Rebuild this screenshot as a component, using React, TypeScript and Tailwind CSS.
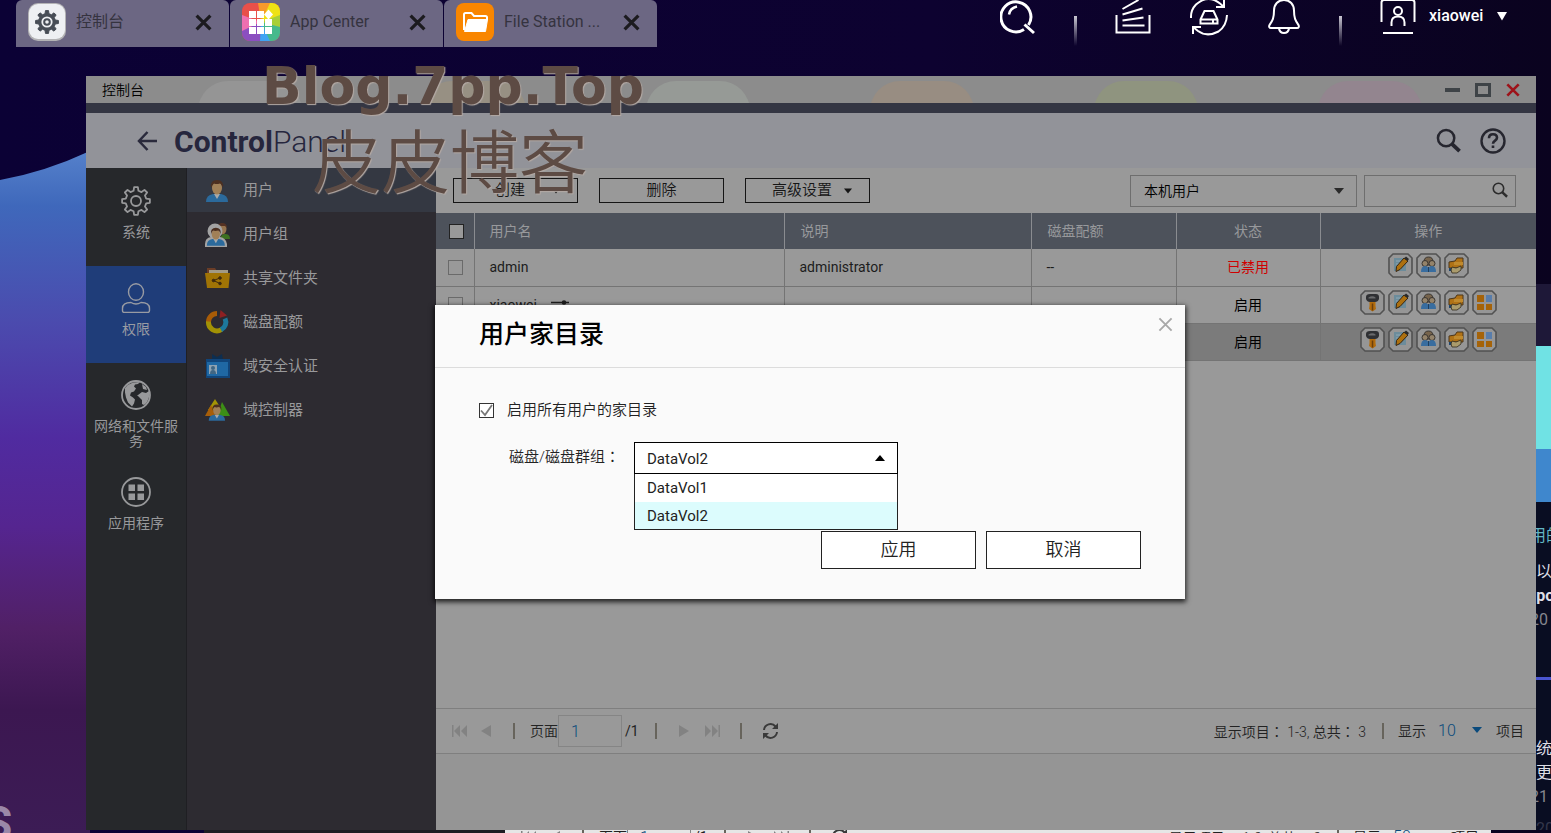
import React, { useState } from 'react';

const FONT = "font-[Roboto,'Noto_Sans_CJK_SC',sans-serif]";

// outline of a cog wheel around (cx, cy)
const cogPath = (cx: number, cy: number, outer: number, inner: number, teeth = 8) => {
  const step = (Math.PI * 2) / teeth;
  const points: string[] = [];
  for (let i = 0; i < teeth; i++) {
    const a = i * step - Math.PI / 2;
    [
      [inner, -0.3],
      [outer, -0.17],
      [outer, 0.17],
      [inner, 0.3],
    ].forEach(([r, k]) => {
      points.push(`${(cx + r * Math.cos(a + k * step)).toFixed(2)} ${(cy + r * Math.sin(a + k * step)).toFixed(2)}`);
    });
  }
  return `M${points.join('L')}Z`;
};

/* ---------- top bar ---------- */

const ControlPanelAppIcon = () => (
  <svg width="38" height="38" viewBox="0 0 38 38">
    <rect width="38" height="38" rx="10" fill="#b3b3b5" />
    <rect x="1" y="1" width="36" height="35" rx="9" fill="#eef0f3" />
    <path d={cogPath(19, 19, 11.5, 8.5)} fill="#474d56" stroke="#474d56" strokeLinejoin="round" />
    <circle cx="19" cy="19" r="5.6" fill="#eef0f3" />
    <circle cx="19" cy="19" r="2.8" fill="none" stroke="#474d56" strokeWidth="2" />
  </svg>
);

const AppCenterIcon = () => (
  <svg width="38" height="38" viewBox="0 0 38 38">
    <defs>
      <clipPath id="app-center-clip">
        <rect width="38" height="38" rx="8" />
      </clipPath>
    </defs>
    <g clipPath="url(#app-center-clip)">
      <rect width="38" height="38" fill="#e8504a" />
      <path d="M16 0h14L19 19z" fill="#f79a2c" />
      <path d="M28 0h10v22L19 19z" fill="#efe215" />
      <path d="M38 12v14L19 19z" fill="#a8cf38" />
      <path d="M38 24v14H26l-7-19z" fill="#46b98c" />
      <path d="M28 38H14l5-19z" fill="#3fa4f3" />
      <path d="M18 38H0V26l19-7z" fill="#8b4fc0" />
      <path d="M0 28V12l19 7z" fill="#ee6fb0" />
    </g>
    <g fill="#fff">
      <path d="M7 8h7v7H7zM15 8h7v7h-7zM7 16h7v7H7zM15 16h7v7h-7zM23 16h7v7h-7zM7 24h7v7H7zM15 24h7v7h-7zM23 24h7v7h-7z" />
      <path d="M26.500 6.500 31 11.500 26.500 16.500 22 11.500z" />
    </g>
  </svg>
);

const FileStationIcon = () => (
  <svg width="38" height="38" viewBox="0 0 38 38">
    <rect width="38" height="38" rx="8" fill="#f98600" />
    <path d="M8 27V11.500q0-1.500 1.500-1.500h6l2.500 3h11.500q1.500 0 1.500 1.500V17" fill="none" stroke="#fff" strokeWidth="2" />
    <path d="M12 16.500h19.500L29.500 28.500H8.500z" fill="#fff" stroke="#fff" strokeLinejoin="round" />
  </svg>
);

const Cross = ({ size, width, className }: { size: number; width: number; className: string }) => (
  <svg width={size} height={size} viewBox="0 0 16 16" className={className}>
    <path d="M1.500 1.500l13 13M14.500 1.500l-13 13" stroke="currentColor" strokeWidth={width} fill="none" />
  </svg>
);

const tabs = [
  { label: '控制台', icon: <ControlPanelAppIcon /> },
  { label: 'App Center', icon: <AppCenterIcon /> },
  { label: 'File Station ...', icon: <FileStationIcon /> },
];

const Divider = () => <span className="h-[30px] w-[3px] mt-4 bg-gradient-to-b from-[#c9c7d2] to-transparent" />;

const TopBar = () => (
  <header className="relative flex justify-between h-[76px] pl-4 pr-11">
    <nav className="flex gap-px h-[47px]">
      {tabs.map((tab) => (
        <div key={tab.label} className="flex items-center w-[213px] pb-[3px] pl-3 pr-[17px] rounded-t-md bg-[#6c6783]">
          {tab.icon}
          <a href="#" className="flex-1 ml-2.5 text-base text-[#35333f]">
            {tab.label}
          </a>
          <button aria-label={`关闭 ${tab.label}`}>
            <Cross size={17} width={3} className="text-[#1c1b1f]" />
          </button>
        </div>
      ))}
    </nav>
    <div className="flex items-start gap-[38px] text-white">
      <button aria-label="搜索">
        <svg width="36" height="36" viewBox="0 0 36 36" fill="none" stroke="currentColor" strokeWidth="3">
          <path d="M24 29.500A15 15 0 1 1 28.500 25M24.500 24.500l9.500 8.500" />
          <path d="M9 14.500q1-6.500 8-8" strokeWidth="2.500" />
        </svg>
      </button>
      <Divider />
      <button aria-label="后台任务">
        <svg width="36" height="36" viewBox="0 0 36 36" fill="none" stroke="currentColor" strokeWidth="2">
          <path d="M1.500 15v17.500h33V15M7.500 25.500h22M7.500 20.500l21-3M7.500 14.500l20-6M7.500 9l16-9" />
        </svg>
      </button>
      <button aria-label="外部设备">
        <svg width="40" height="36" viewBox="0 0 40 36" fill="none" stroke="currentColor" strokeWidth="2">
          <path d="M2 18A18 18 0 0 1 7 4.500Q19-6 31 3.500L35 7M38 15Q37.500 26 29.500 31.500 18 37.500 9 31L4 27" />
          <path d="M35 -1v8h-8M4 34v-7h8" />
          <path d="M15.500 11h9l4 8.500v4h-17v-4zM11.500 19.500h17M24 19.500v4" />
        </svg>
      </button>
      <button aria-label="通知">
        <svg width="34" height="36" viewBox="0 0 34 36" fill="none" stroke="currentColor" strokeWidth="2">
          <path d="M17 0c-6 0-10 4.500-10 10.500 0 8-1.500 10-4.500 14.500-.8 1.500-.3 3 1.500 3h26c1.800 0 2.300-1.500 1.500-3-3-4.500-4.500-6.500-4.500-14.500C27 4.500 23 0 17 0z" />
          <path d="M12 28.500c.5 3 2.500 4.500 5 4.500s4.500-1.500 5-4.500" />
        </svg>
      </button>
      <Divider />
      <button className="flex items-start">
        <svg width="36" height="36" viewBox="0 0 36 36" fill="none" stroke="currentColor" strokeWidth="2">
          <path d="M1.500 22V2.500Q1.500 0 4 0h28q2.500 0 2.500 2.500V22" />
          <circle cx="18" cy="11" r="4" />
          <path d="M11.500 26v-3.500q0-6 6.500-6t6.500 6V26M3 33h30" />
        </svg>
        <span className="w-16 ml-[13px] mt-1 text-base text-left font-medium">xiaowei</span>
        <svg width="10" height="9" viewBox="0 0 10 9" className="ml-1 mt-3">
          <path d="M0 0h10L5 8.500z" fill="currentColor" />
        </svg>
      </button>
    </div>
  </header>
);

/* ---------- left category bar ---------- */

const categories = [
  {
    label: '系统',
    icon: (
      <>
        <path d={cogPath(15, 15, 14, 10.5)} fill="none" stroke="currentColor" strokeWidth="1.800" strokeLinejoin="round" />
        <circle cx="15" cy="15" r="5" fill="none" stroke="currentColor" strokeWidth="1.800" />
      </>
    ),
  },
  {
    label: '权限',
    active: true,
    icon: (
      <g fill="none" stroke="currentColor" strokeWidth="1.400">
        <ellipse cx="15" cy="9" rx="7.500" ry="8.300" />
        <path d="M10 19.500q5 3 10 0c5 0 8.500 1.500 8.500 6v2q0 2-2 2h-23q-2 0-2-2v-2c0-4.500 3.500-6 8.500-6z" />
      </g>
    ),
  },
  {
    label: '网络和文件服务',
    icon: (
      <>
        <circle cx="15" cy="15" r="14" fill="none" stroke="currentColor" strokeWidth="1.800" />
        <path
          d="M4 8q3-4 8-5.500l7-.5-2 2-3 .5-1 2 2 2-2 3-3 1-1 3 3 2 2 2-1 4-2 3-4-4-2-5-1-5zM17 15l4-3 4 1 3-2v6q-1 5-5 8l-2-1 0-4-3-3-2-2zM21 4l4 3 1 3-4-1z"
          fill="currentColor"
        />
      </>
    ),
  },
  {
    label: '应用程序',
    icon: (
      <>
        <circle cx="15" cy="15" r="14" fill="none" stroke="currentColor" strokeWidth="1.800" />
        <path d="M7.500 7.500H14V14H7.500zM16.500 7.500H23V14h-6.500zM7.500 16.500H14V23H7.500zM16.500 16.500H23V23h-6.500z" fill="currentColor" />
      </>
    ),
  },
];

const CategoryBar = () => (
  <nav className="w-[101px] shrink-0 pt-px border-r border-[#1f1f23] bg-[#26282b]">
    {categories.map((item) => (
      <a
        key={item.label}
        href="#"
        className={`flex flex-col items-center h-[97px] pt-[17px] px-2 text-sm leading-[15px] text-center ${
          item.active ? 'bg-[#1f3d79] text-[#989ba3]' : 'text-[#98999b]'
        }`}
      >
        <svg width="30" height="30" viewBox="0 0 30 30">
          {item.icon}
        </svg>
        <span className="mt-[9px]">{item.label}</span>
      </a>
    ))}
  </nav>
);

/* ---------- sub menu ---------- */

const Person = () => (
  <>
    <path d="M1 24q0-7 7-8h8q7 1 7 8z" fill="#2b6a9c" />
    <path d="M9 16l3 5 3-5z" fill="#a9a9a9" />
    <ellipse cx="12" cy="10" rx="5" ry="6.500" fill="#a18057" />
    <path d="M6 10q-1-8 6-8t6 8q-1-4-3-4.500-4 1-6 0-2 1-3 4.500z" fill="#4c2f20" />
  </>
);

const menu = [
  { label: '用户', active: true, icon: <Person /> },
  {
    label: '用户组',
    icon: (
      <>
        <ellipse cx="17" cy="7" rx="4.500" ry="5.500" fill="#96744e" />
        <path d="M12 7q0-6 5-6t5 5l-2-2h-5z" fill="#553223" />
        <path d="M15 17q1-5 5-5 5 0 5 5z" fill="#3d7021" />
        <circle cx="10" cy="9" r="7.500" fill="#a3a3a3" />
        <path d="M0 25v-3q0-6 6-7h9q6 1 7 7v3z" fill="#a3a3a3" />
        <g transform="translate(1 4) scale(.82)">
          <Person />
        </g>
      </>
    ),
  },
  {
    label: '共享文件夹',
    icon: (
      <>
        <path d="M2 2h8l2 3h11v8H2z" fill="#6a3d27" />
        <path d="M4 4h19v8H4z" fill="#a19a85" />
        <path d="M0 7h25l-1.500 15H2z" fill="#a07405" />
        <g fill="#3f2b0d" stroke="#3f2b0d" strokeWidth="1">
          <circle cx="8.500" cy="14.500" r="1.300" />
          <circle cx="15" cy="12" r="1.300" />
          <circle cx="15" cy="17.500" r="1.300" />
          <path d="M15 12l-6.500 2.500 6.500 3" fill="none" />
        </g>
      </>
    ),
  },
  {
    label: '磁盘配额',
    icon: (
      <g fill="none" strokeWidth="5">
        <path d="M12 3.500A8.500 8.500 0 0 0 3.500 12" stroke="#a85c07" />
        <path d="M3.500 11.500A8.500 8.500 0 0 0 16.500 19.500" stroke="#a29205" />
        <path d="M16 19.800A8.500 8.500 0 0 0 20 8.500" stroke="#1d789b" />
        <path d="M14.500 8 15.500 0l6.500 5.500z" fill="#8d2022" stroke="none" />
      </g>
    ),
  },
  {
    label: '域安全认证',
    icon: (
      <>
        <path d="M7 0l5 3 5-3 1 6H7z" fill="#0d2e50" />
        <path d="M1 5h24v19H1z" fill="#11457a" />
        <path d="M2 8h21v14H2z" fill="#1f68a4" />
        <path d="M4 11h8v9H4z" fill="#8fa3b3" />
        <circle cx="8" cy="14" r="2" fill="#3f6684" />
        <path d="M5 20q0-4 3-4t3 4z" fill="#3f6684" />
      </>
    ),
  },
  {
    label: '域控制器',
    icon: (
      <>
        <path d="M10 1l7 11H3z" fill="#a39404" />
        <path d="M6 7l5 11H0z" fill="#a75e09" />
        <path d="M17 4l8 14H12z" fill="#3c8f16" />
        <g transform="translate(3 5) scale(.74)">
          <Person />
        </g>
      </>
    ),
  },
];

const SubMenu = () => (
  <nav className="w-[249px] shrink-0 bg-[#2d2b31]">
    {menu.map((item) => (
      <a
        key={item.label}
        href="#"
        className={`flex items-center h-11 pl-[18px] gap-[13px] text-[15px] text-[#99999b] ${item.active ? 'bg-[#343842]' : ''}`}
      >
        <svg width="25" height="25" viewBox="0 0 25 25">
          {item.icon}
        </svg>
        {item.label}
      </a>
    ))}
  </nav>
);

/* ---------- toolbar ---------- */

const Caret = ({ className = '' }: { className?: string }) => (
  <svg width="10" height="6" viewBox="0 0 10 6" className={className}>
    <path d="M0 0h10L5 6z" fill="currentColor" />
  </svg>
);

const Magnifier = ({ size, className = '' }: { size: number; className?: string }) => (
  <svg width={size} height={size} viewBox="0 0 26 26" fill="none" stroke="currentColor" className={className}>
    <circle cx="10.500" cy="10.500" r="8.500" strokeWidth="2.600" />
    <path d="M16.500 16.500l8 7.500" strokeWidth="4" />
  </svg>
);

const ToolButton = ({ label, caret }: { label: string; caret?: boolean }) => (
  <button
    className={`flex items-center w-[125px] h-[25px] border border-[#151515] text-[15px] font-[350] text-[#151515] ${
      caret ? 'pl-3.5 pr-[17px]' : ''
    }`}
  >
    <span className="flex-1 text-center">{label}</span>
    {caret && <Caret className="w-2" />}
  </button>
);

const Toolbar = () => (
  <div className="flex items-center justify-between h-[45px] pl-[17px] pr-5">
    <div className="flex gap-[21px]">
      <ToolButton label="创建" caret />
      <ToolButton label="删除" />
      <ToolButton label="高级设置" caret />
    </div>
    <div className="flex gap-[7px]">
      <div className="relative">
        <select
          aria-label="用户类型"
          className="appearance-none w-[227px] h-8 pl-[13px] border border-[#6e6e6e] text-sm font-[350] text-black"
        >
          <option>本机用户</option>
        </select>
        <Caret className="absolute right-[13px] top-[13px] text-[#2a2a2a]" />
      </div>
      <div className="relative">
        <input aria-label="搜索用户" className="w-[152px] h-8 px-2 border border-[#6e6e6e]" />
        <Magnifier size={16} className="absolute right-2 top-[7px] text-[#2c2c2c]" />
      </div>
    </div>
  </div>
);

/* ---------- user table ---------- */

const actionIcons: Record<string, React.ReactNode> = {
  密码: (
    <>
      <path d="M6 7q0-3 4-3h6q3 0 3 3v2q-1 3-4 3h-5q-3 0-4-3z" fill="#2f3033" />
      <path d="M8.500 7.500q4-2.500 7 0v1h-7z" fill="#6a6b6d" />
      <path d="M9.500 12h6v4l.5 3-3.500 2.500L9 19l.5-3z" fill="#b26c0d" />
      <path d="M12.500 13.500v7" stroke="#6b3f0c" strokeWidth="1.500" />
    </>
  ),
  编辑: (
    <>
      <path d="M6 5h12v13H6z" fill="#6c8c9b" />
      <path d="M8 8h6M8 11h4M8 14h3" stroke="#8fa9b5" />
      <path d="M16 5l4 3-8 8.500-4 2 .5-5z" fill="#ad700f" stroke="#372511" />
      <path d="M16 5.500l3.500 2.500 1.500-2-3-2.500z" fill="#2b2b2b" />
    </>
  ),
  用户组: (
    <>
      <path d="M8 9q0-5 4.500-5T17 9v3H8z" fill="#77644c" stroke="#393531" />
      <circle cx="9" cy="10.500" r="3" fill="#94836a" stroke="#393531" />
      <circle cx="16" cy="10.500" r="3" fill="#94836a" stroke="#393531" />
      <path d="M5 19q0-6 4-6 3 0 3.500 3 .5-3 3.500-3 4 0 4 6z" fill="#396d9f" />
      <path d="M12.500 14v5" stroke="#213f5d" />
    </>
  ),
  共享文件夹: (
    <>
      <path d="M5 9l6-1 2-3h6v10H5z" fill="#b07216" stroke="#4c361a" />
      <path d="M10 9h9v3h-9z" fill="#c08a2d" />
      <path d="M5 15h6v3H5z" fill="#20466d" />
      <path d="M8 14l4 1 5-2v4l-4 3H8l-1-3z" fill="#aa9b6c" stroke="#322b1d" strokeWidth=".800" />
    </>
  ),
  应用程序: (
    <>
      <path d="M5 5h7v7H5zM5 14h7v6H5zM14 14h6v6h-6z" fill="#a56309" />
      <path d="M14 5h6v7h-6z" fill="#587dab" />
    </>
  ),
};

const ActionIcon = ({ name }: { name: string }) => (
  <button aria-label={name}>
    <svg width="25" height="25" viewBox="0 0 25 25" className="block">
      <path d="M5 1h15l4 4v15l-4 4H5l-4-4V5z" fill="#969696" stroke="#525252" strokeWidth="1.600" />
      {actionIcons[name]}
    </svg>
  </button>
);

interface UserRow {
  name: string;
  description: string;
  enabled: boolean;
  shared?: boolean;
  selected?: boolean;
  actions: string[];
}

const allActions = ['密码', '编辑', '用户组', '共享文件夹', '应用程序'];

const users: UserRow[] = [
  { name: 'admin', description: 'administrator', enabled: false, actions: allActions.slice(1, 4) },
  { name: 'xiaowei', description: '', enabled: true, shared: true, actions: allActions },
  { name: '', description: '', enabled: true, selected: true, actions: allActions },
];

const UserTable = () => (
  <table className="w-full table-fixed border-collapse text-sm leading-[18px] text-[#1c1c1c]">
    <colgroup>
      <col className="w-[38px]" />
      <col className="w-[310px]" />
      <col className="w-[247px]" />
      <col className="w-[145px]" />
      <col className="w-[144px]" />
      <col />
    </colgroup>
    <thead>
      <tr className="h-9 bg-[#4d525b] text-[#98999c] text-left [&>th]:font-normal [&>th]:border-r [&>th]:border-[#8a8c90] [&>th:last-child]:border-r-0">
        <th className="pl-[13px]">
          <input type="checkbox" aria-label="全选" className="block appearance-none size-[15px] border border-[#222] bg-[#999]" />
        </th>
        <th className="pl-[15px]">用户名</th>
        <th className="pl-4">说明</th>
        <th className="pl-4">磁盘配额</th>
        <th className="text-center">状态</th>
        <th className="text-center">操作</th>
      </tr>
    </thead>
    <tbody>
      {users.map((user, index) => (
        <tr
          key={index}
          className={`h-[37px] border-b border-[#747474] [&>td]:border-r [&>td]:border-[#747474] [&>td:last-child]:border-r-0 ${
            user.selected ? 'bg-[#7b7b7b]' : ''
          }`}
        >
          <td className="pl-3">
            <input
              type="checkbox"
              aria-label={`选择 ${user.name}`}
              className="block appearance-none size-[15px] border border-[#6a6a6a]"
            />
          </td>
          <td className="pl-[15px]">
            <div className="flex items-center gap-3.5">
              {user.name}
              {user.shared && (
                <svg width="18" height="12" viewBox="0 0 18 12" fill="none" stroke="currentColor" strokeWidth="1.500">
                  <path d="M0 3.500h18M0 8.500h18" />
                  <circle cx="13" cy="3.500" r="1.500" fill="currentColor" />
                  <circle cx="5" cy="8.500" r="1.500" fill="currentColor" />
                </svg>
              )}
            </div>
          </td>
          <td className="pl-[15px]">{user.description}</td>
          <td className="pl-[15px]">--</td>
          <td className={`text-center ${user.enabled ? 'text-black' : 'text-[#d00000]'}`}>{user.enabled ? '启用' : '已禁用'}</td>
          <td>
            <div className="flex justify-center gap-[3px] pb-1">
              {user.actions.map((name) => (
                <ActionIcon key={name} name={name} />
              ))}
            </div>
          </td>
        </tr>
      ))}
    </tbody>
  </table>
);

/* ---------- pager ---------- */

const Colon = () => <span className="font-['Noto_Sans_CJK_TC',sans-serif]">：</span>;

const Bar = () => <span className="w-0.5 h-4 bg-[#67645c]" />;

const Pager = ({ size }: { size: number }) => (
  <div className="flex items-center justify-between h-11 pl-4 pr-3 text-sm text-[#222]">
    <div className="flex items-center">
      <button aria-label="首页" className="text-[#828282]">
        <svg width="15" height="12" viewBox="0 0 15 12" fill="currentColor">
          <path d="M0 0h1.500v12H0zM8 0v12L2 6zM15 0v12L9 6z" />
        </svg>
      </button>
      <button aria-label="上一页" className="ml-3.5 mr-[22px] text-[#828282]">
        <svg width="10" height="12" viewBox="0 0 10 12" fill="currentColor">
          <path d="M10 0v12L0 6z" />
        </svg>
      </button>
      <Bar />
      <label className="flex items-center ml-[15px] font-[350]">
        页面
        <input defaultValue="1" className="w-16 h-8 mr-[3px] pl-3 border border-[#858585] text-base text-[#0a4a7c]" />
      </label>
      <span className="mr-4">/1</span>
      <Bar />
      <button aria-label="下一页" className="ml-[22px] mr-4 text-[#828282]">
        <svg width="10" height="12" viewBox="0 0 10 12" fill="currentColor">
          <path d="M0 0v12l10-6z" />
        </svg>
      </button>
      <button aria-label="末页" className="mr-5 text-[#828282]">
        <svg width="15" height="12" viewBox="0 0 15 12" fill="currentColor">
          <path d="M13.500 0H15v12h-1.500zM0 0v12l6-6zM7 0v12l6-6z" />
        </svg>
      </button>
      <Bar />
      <button aria-label="刷新" className="ml-5 text-[#3a3a3a]">
        <svg width="17" height="18" viewBox="0 0 17 18" fill="none" stroke="currentColor" strokeWidth="2">
          <path d="M2 8A6.500 6.500 0 0 1 13.500 4.500M15 10A6.500 6.500 0 0 1 3.500 13.500" />
          <path d="M16 1v6h-6zM1 17v-6h6z" fill="currentColor" stroke="none" />
        </svg>
      </button>
    </div>
    <div className="flex items-center font-[350]">
      <span className="leading-5">
        显示项目
        <Colon /> 1-3, 总共
        <Colon /> 3
      </span>
      <span className="w-0.5 h-4 ml-4 mr-[14px] bg-[#67645c]" />
      <span>显示</span>
      <span className="relative mx-3">
        <select aria-label="每页项目数" className="appearance-none w-[46px] text-base text-[#0a4a7c]">
          <option>{size}</option>
        </select>
        <Caret className="absolute right-0.5 top-2 text-[#0a4a7c]" />
      </span>
      <span>项目</span>
    </div>
  </div>
);

/* ---------- home folder dialog ---------- */

const volumes = ['DataVol1', 'DataVol2'];

const HomeFolderDialog = () => {
  const [enabled, setEnabled] = useState(true);
  const [volume, setVolume] = useState('DataVol2');

  return (
    <div className="absolute inset-0 flex items-center justify-center pr-0.5 pb-0.5">
      <section role="dialog" aria-label="用户家目录" className="w-[750px] bg-[#fafafa] shadow-[0_2px_5px_1px_rgba(0,0,0,0.8)]">
        <div className="flex items-start justify-between h-[63px] pl-11 pr-3 pt-3 border-b border-[#dcdcdc]">
          <h2 className="text-[25px] leading-9 font-medium text-black">用户家目录</h2>
          <button aria-label="关闭">
            <Cross size={15} width={2} className="text-[#a8a8a8]" />
          </button>
        </div>
        <div className="px-11 pt-[30px] pb-[30px] text-[15px] text-[#222]">
          <label className="flex items-center gap-[13px] h-6 font-[350]">
            <span className="relative size-[15px]">
              <input
                type="checkbox"
                checked={enabled}
                onChange={(e) => setEnabled(e.target.checked)}
                className="block appearance-none size-[15px] border border-[#333] bg-white"
              />
              {enabled && (
                <svg width="15" height="15" viewBox="0 0 15 15" className="absolute inset-0 pointer-events-none">
                  <path d="M2 7.500l4 4.500 7-10" fill="none" stroke="#777" strokeWidth="1.800" />
                </svg>
              )}
            </span>
            启用所有用户的家目录
          </label>
          <div className="flex items-start mt-5 pl-[30px]">
            <label htmlFor="volume" className="w-[125px] leading-7 font-[350]">
              磁盘/磁盘群组
              <Colon />
            </label>
            <div className="relative w-[264px]">
              <select
                id="volume"
                value={volume}
                onChange={(e) => setVolume(e.target.value)}
                className="block appearance-none w-full h-8 pt-0.5 pl-3 border border-black bg-white text-[15px] text-[#222]"
              >
                {volumes.map((v) => (
                  <option key={v}>{v}</option>
                ))}
              </select>
              <Caret className="absolute right-[13px] top-[13px] rotate-180 text-black" />
              <ul className="absolute inset-x-0 top-8 border border-t-0 border-[#222] bg-white text-[#222]">
                {volumes.map((v) => (
                  <li
                    key={v}
                    onClick={() => setVolume(v)}
                    className={`h-7 pl-3 leading-7 last:h-[27px] last:leading-7 ${v === volume ? 'bg-[#dcfcfd]' : ''}`}
                  >
                    {v}
                  </li>
                ))}
              </ul>
            </div>
          </div>
          <div className="flex justify-end gap-2.5 mt-[57px] text-lg leading-none font-[350]">
            <button className="w-[155px] h-[38px] border border-[#222] bg-white">应用</button>
            <button className="w-[155px] h-[38px] border border-[#222] bg-white">取消</button>
          </div>
        </div>
      </section>
    </div>
  );
};

/* ---------- window ---------- */

// desktop shortcuts that shine through the title bar
const shortcuts = ['bg-[#959595]', 'bg-[#979083]', 'bg-[#969a96]', 'bg-[#988d82]', 'bg-[#8f947f]', 'bg-[#93858f]'];

const ControlPanelWindow = () => (
  <main className="relative flex-1 min-w-0 flex flex-col bg-[#999]">
    <div className="relative flex items-center justify-between h-[27px] pl-4 pr-4 bg-[#8c8c8c]">
      <div className="absolute inset-0 flex gap-[120px] pl-28 pt-[5px] overflow-hidden">
        {shortcuts.map((color) => (
          <span key={color} className={`w-[104px] h-[60px] shrink-0 rounded-[30px] ${color}`} />
        ))}
      </div>
      <h1 className="relative text-sm leading-none font-[350] text-black">控制台</h1>
      <div className="relative flex items-center gap-[15px] text-[#3e4347]">
        <button aria-label="最小化" className="w-[15px] h-1 bg-[#3e4347]" />
        <button aria-label="最大化" className="w-4 h-3.5 border-[3px] border-[#3e4347]" />
        <button aria-label="关闭窗口">
          <Cross size={14} width={3} className="text-[#9d1219]" />
        </button>
      </div>
    </div>
    <div className="flex items-center justify-between h-[65px] pl-[51px] pr-[30px] border-t-[10px] border-[#343643] bg-[#929399] text-[#26262f]">
      <div className="flex items-center gap-[17px]">
        <button aria-label="返回">
          <svg width="20" height="20" viewBox="0 0 20 20" fill="none" stroke="#2a2a3c" strokeWidth="2.500">
            <path d="M20 10H2M10.500 1L2 10l8.500 9" />
          </svg>
        </button>
        <h2 className="pt-0.5 text-[30px] leading-none font-light text-[#26263d]">
          <b className="font-bold">Control</b>Panel
        </h2>
      </div>
      <div className="flex items-center gap-[19px]">
        <button aria-label="搜索设置">
          <Magnifier size={25} />
        </button>
        <button aria-label="帮助">
          <svg width="26" height="26" viewBox="0 0 26 26" fill="none" stroke="currentColor" strokeWidth="2.400">
            <circle cx="13" cy="13" r="11.500" />
            <path d="M9 10.200q0-4 4-4t4 3.600c0 3-4 2.600-4 6M13 17.500v2.500" strokeWidth="2.600" />
          </svg>
        </button>
      </div>
    </div>
    <div className="flex flex-1">
      <CategoryBar />
      <SubMenu />
      <div className="flex flex-col flex-1 min-w-0">
        <Toolbar />
        <UserTable />
        <div className="mt-auto pb-[76px] bg-[#959595]">
          <div className="border-y border-[#7f7f7f] bg-[#999]">
            <Pager size={10} />
          </div>
        </div>
      </div>
    </div>
    <HomeFolderDialog />
  </main>
);

/* ---------- desktop ---------- */

const Wallpaper = () => (
  <svg className="absolute inset-0 w-full h-full" viewBox="0 0 1551 833" preserveAspectRatio="none">
    <defs>
      <linearGradient id="sky" x1="0" x2="1">
        <stop offset="0" stopColor="#0b0135" />
        <stop offset=".6" stopColor="#0d0230" />
        <stop offset="1" stopColor="#0a031f" />
      </linearGradient>
      <linearGradient id="wave" x1="0" y1="0" x2="0" y2="1">
        <stop offset="0" stopColor="#5581cb" />
        <stop offset=".08" stopColor="#3f68bb" />
        <stop offset=".25" stopColor="#4b4bae" />
        <stop offset=".42" stopColor="#502ba0" />
        <stop offset=".55" stopColor="#552590" />
        <stop offset=".7" stopColor="#512066" />
        <stop offset=".82" stopColor="#3c1751" />
        <stop offset="1" stopColor="#3c1c55" />
      </linearGradient>
    </defs>
    <path d="M0 0h1551v833H0z" fill="url(#sky)" />
    <path d="M0 180Q45 172 90 151V833H0z" fill="url(#wave)" />
  </svg>
);

// the part of the news panel that the window leaves uncovered
const NewsPanel = () => (
  <aside className="w-[15px] shrink-0 overflow-hidden whitespace-nowrap text-base text-[#dedee6]">
    <div className="h-[208px]" />
    <div className="h-[62px] bg-[#1e1838]" />
    <div className="h-[103px] bg-[#70e2e4]" />
    <div className="h-[53px] bg-[#3f87cd]" />
    <div className="h-[328px] flex flex-col bg-[#090d22]">
      <div className="h-[178px] shrink-0 pt-[22px] border-b-[3px] border-[#4a55d0]">
        <p className="-ml-1.5 text-[#62b6c4]">用的</p>
        <p className="mt-3">以</p>
        <p className="-ml-1 font-bold">lpo</p>
        <p className="-ml-1.5 text-[#85868f]">20</p>
      </div>
      <p className="mt-[57px]">统</p>
      <p>更</p>
      <p className="-ml-1.5 text-[#85868f]">21</p>
      <p className="mt-2 text-[#33364a]">20</p>
    </div>
  </aside>
);

const Watermark = () => (
  <div className="absolute left-[262px] top-14 pointer-events-none text-[#5d4b44] [text-shadow:1px_1px_1px_#b3a9a4]">
    <p className="font-['DejaVu_Sans',sans-serif] font-bold text-[52px] leading-[60px]">Blog.7pp.Top</p>
    <p className="pt-[3px] pl-[50px] font-[350] text-[69px] leading-[92px]">皮皮博客</p>
  </div>
);

const App: React.FC = () => {
  return (
    <div className={`relative flex flex-col min-h-screen overflow-hidden bg-[#0b0135] ${FONT}`}>
      <Wallpaper />
      <TopBar />
      <div className="relative flex flex-1">
        <div className="flex items-end w-[86px] shrink-0">
          <span className="-ml-4 -mb-4 text-[46px] leading-[46px] font-bold text-[#9b88a8]">S</span>
        </div>
        <ControlPanelWindow />
        <NewsPanel />
      </div>
      <div className="relative flex h-[3px] pl-[204px] pr-[60px] overflow-hidden">
        <div className="w-[301px] shrink-0 bg-[#1e1d22]" />
        <div className="flex-1 h-11 bg-[#e6e6e6]">
          <div className="-mt-[15px]">
            <Pager size={50} />
          </div>
        </div>
      </div>
      <Watermark />
    </div>
  );
};

export default App;
